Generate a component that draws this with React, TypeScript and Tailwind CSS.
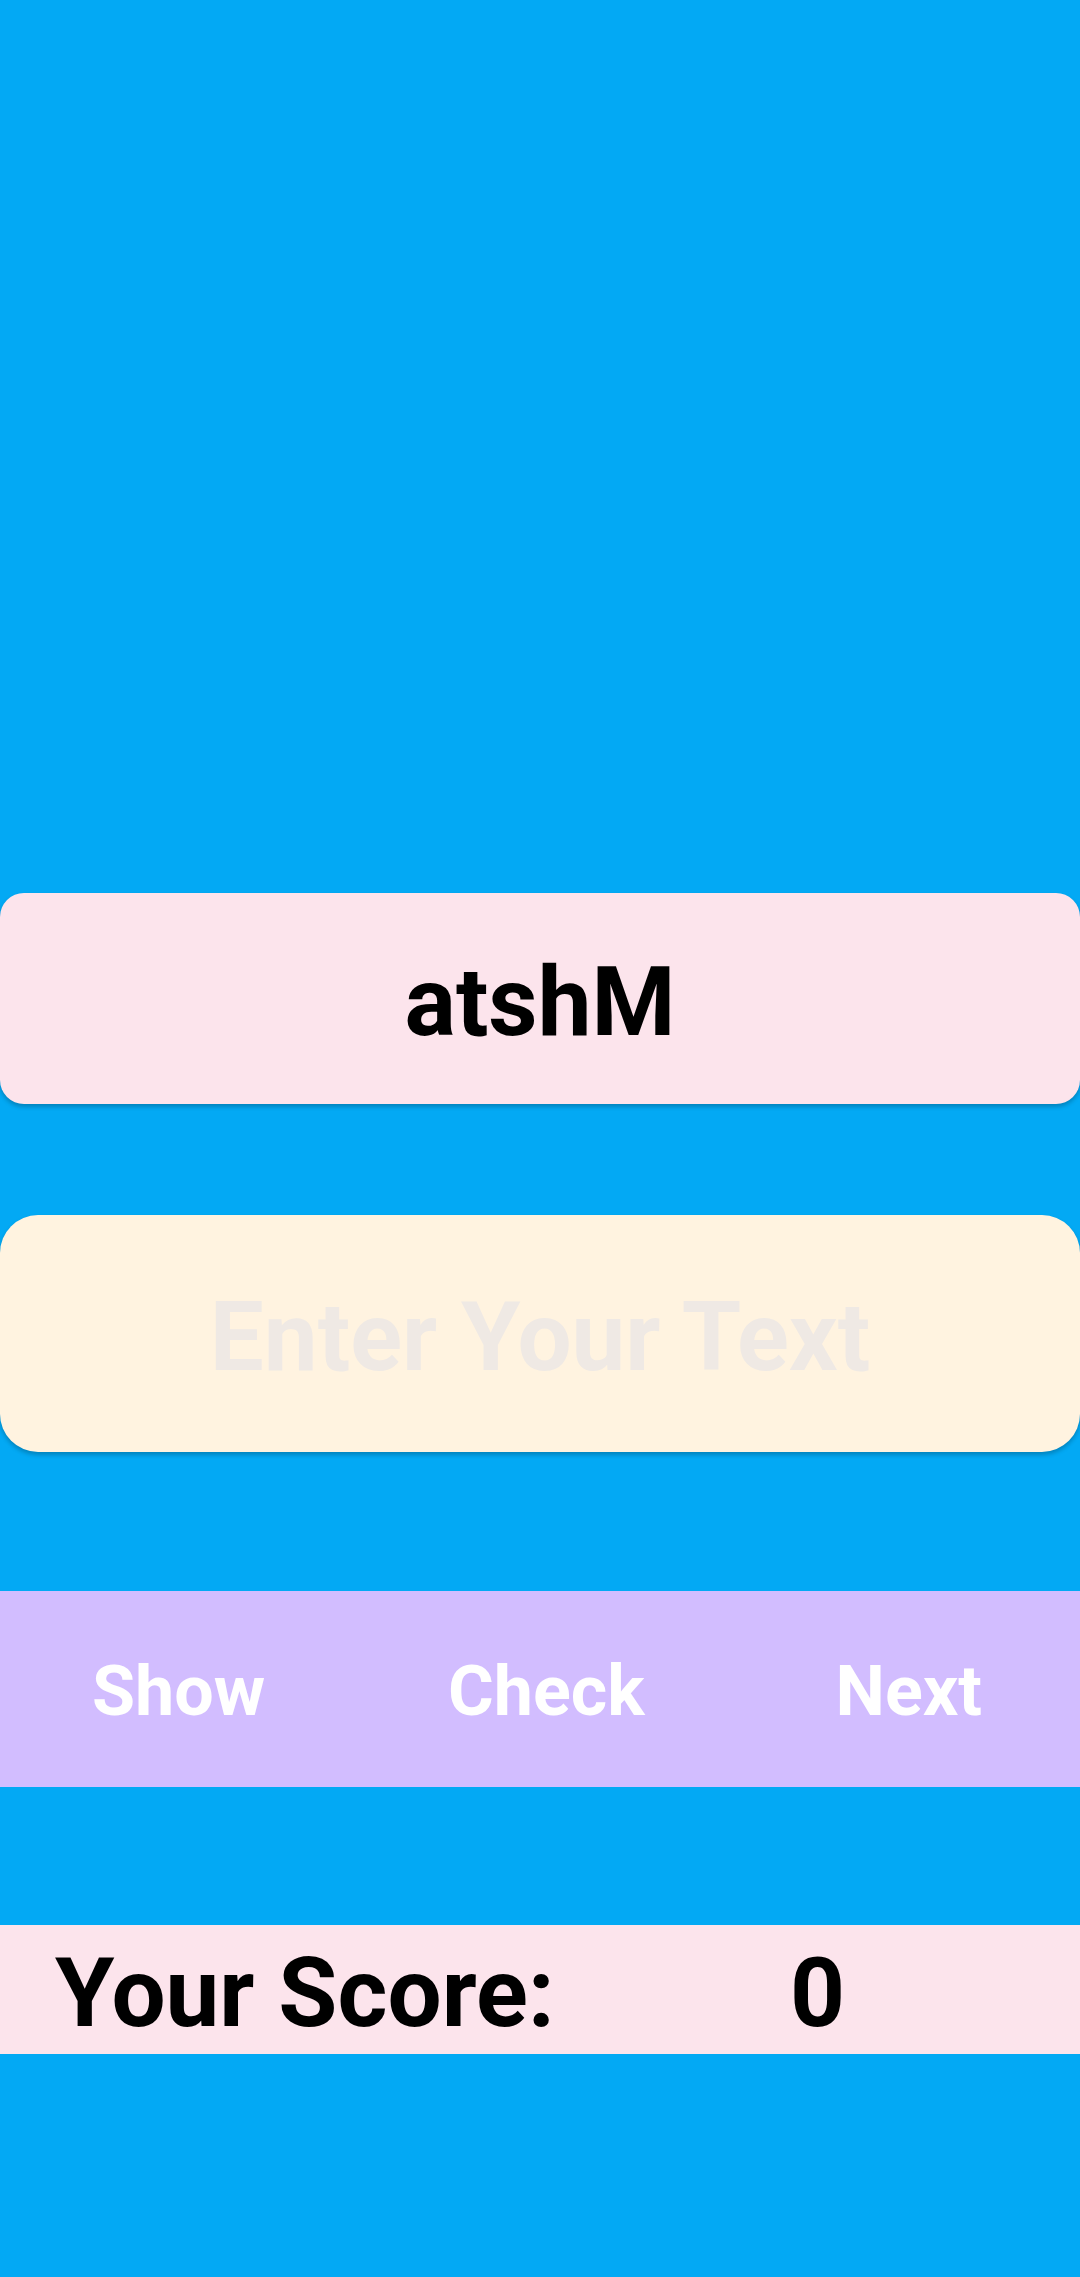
import { useState } from "react";

export default function App() {
  const [guess, setGuess] = useState("");
  const [score] = useState(0);

  return (
    <div className="min-h-[2277px] w-[1080px] bg-[#03a9f4] font-['Roboto',_'Noto_Sans',_sans-serif] font-bold flex flex-col">
      {/* scrambled word */}
      <div className="mt-[893px] h-[211px] bg-[#fce4ec] rounded-[24px] shadow-[0_3px_4px_rgba(0,0,0,0.22)] flex items-center justify-center pt-[6px]">
        <span className="text-[96px] leading-none text-black">atshM</span>
      </div>

      {/* answer input */}
      <div className="mt-[111px] h-[237px] bg-[#fff3e0] rounded-[38px] shadow-[0_3px_4px_rgba(0,0,0,0.22)] flex items-center pt-[6px]">
        <input
          value={guess}
          onChange={(e) => setGuess(e.target.value)}
          placeholder="Enter Your Text"
          className="w-full bg-transparent text-center text-[96px] leading-none font-bold text-black outline-none placeholder:text-[#efe9e4]"
        />
      </div>

      {/* actions */}
      <div className="mt-[139px] h-[196px] bg-[#d2bdff] flex items-center justify-between pl-[92px] pr-[98px] pt-[4px] text-[70px] leading-none text-white">
        <button className="font-bold">Show</button>
        <button className="font-bold mr-[8px]">Check</button>
        <button className="font-bold">Next</button>
      </div>

      {/* score */}
      <div className="mt-[138px] h-[129px] bg-[#fce4ec] flex items-center pl-[55px] pt-[6px] text-[96px] leading-none text-black">
        <span className="w-[735px]">Your Score:</span>
        <span>{score}</span>
      </div>
    </div>
  );
}
